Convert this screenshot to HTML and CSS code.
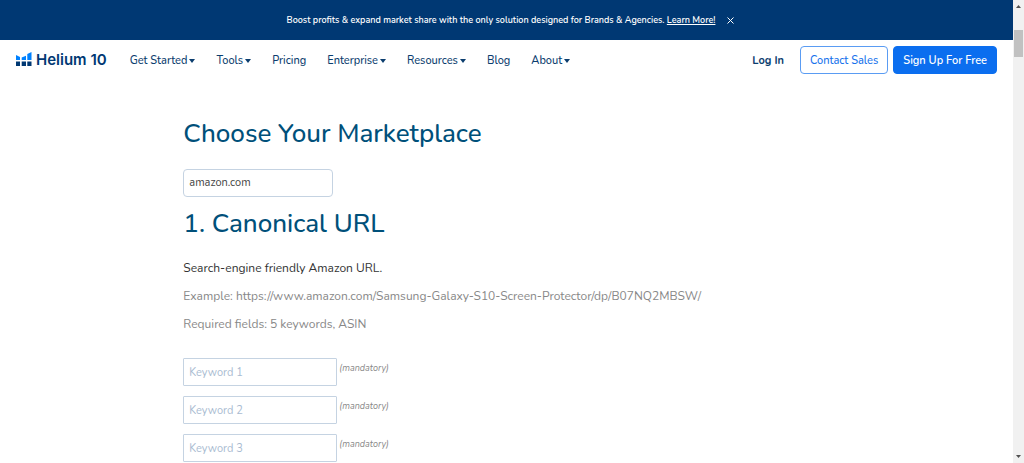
FILE: index.html
```html
<!DOCTYPE html>
<html lang="en">
<head>
<meta charset="utf-8">
<meta name="viewport" content="width=device-width, initial-scale=1">
<title>Helium 10</title>
<link rel="stylesheet" href="styles.css">
</head>
<body>
<div class="window">
  <div class="page">
    <div class="promo">
      <p class="promo-text">Boost profits &amp; expand market share with the only solution designed for Brands &amp; Agencies. <a href="#">Learn More!</a></p>
      <button class="promo-close" type="button" aria-label="Close">
        <svg width="7" height="7" viewBox="0 0 7 7"><path d="M.5.5l6 6M6.5.5l-6 6" stroke="currentColor" fill="none"/></svg>
      </button>
    </div>
    <header class="header">
      <a class="logo" href="#">
        <svg width="16" height="16" viewBox="0 0 16 16" aria-hidden="true">
          <path fill="#0081ff" d="M0 3l4 2v3H0zM5.700 5.500l4.300-1.800V8H5.700zM11.300 2L15.500 0v8h-4.200z"/>
          <path fill="#003873" d="M0 9.500h4V14H0zM5.700 9.500H10V14H5.700zM11.300 9.500h4.200V14h-4.200z"/>
        </svg>
        <span>Helium 10</span>
      </a>
      <nav class="nav">
        <a class="has-menu" href="#">Get Started</a>
        <a class="has-menu" href="#">Tools</a>
        <a href="#">Pricing</a>
        <a class="has-menu" href="#">Enterprise</a>
        <a class="has-menu" href="#">Resources</a>
        <a href="#">Blog</a>
        <a class="has-menu" href="#">About</a>
      </nav>
      <div class="actions">
        <a class="login" href="#">Log In</a>
        <a class="button" href="#">Contact Sales</a>
        <a class="button button-primary" href="#">Sign Up For Free</a>
      </div>
    </header>
    <main class="content">
      <h2><label for="marketplace">Choose Your Marketplace</label></h2>
      <select class="marketplace" id="marketplace"><option>amazon.com</option></select>
      <h2>1. Canonical URL</h2>
      <p class="lead">Search-engine friendly Amazon URL.</p>
      <p>Example: https://www.amazon.com/Samsung-Galaxy-S10-Screen-Protector/dp/B07NQ2MBSW/</p>
      <p>Required fields: 5 keywords, ASIN</p>
      <form class="fields">
        <div class="field"><input id="k1" type="text" placeholder="Keyword 1"><label for="k1">(mandatory)</label></div>
        <div class="field"><input id="k2" type="text" placeholder="Keyword 2"><label for="k2">(mandatory)</label></div>
        <div class="field"><input id="k3" type="text" placeholder="Keyword 3"><label for="k3">(mandatory)</label></div>
      </form>
    </main>
  </div>
  <div class="scrollbar" aria-hidden="true">
    <svg width="5" height="3" viewBox="0 0 5 3"><path d="M0 3L2.500 0 5 3z" fill="#505050"/></svg>
    <div class="thumb"></div>
    <svg width="5" height="3" viewBox="0 0 5 3"><path d="M0 0h5L2.500 3z" fill="#505050"/></svg>
  </div>
</div>
</body>
</html>
```
FILE: styles.css
```css
* { box-sizing: border-box; }
body {
  margin: 0;
  background: #fff;
  color: #888;
  font: 12px/16px Nunito, "Noto Sans", sans-serif;
}
p, h2 { margin: 0; }
a { color: inherit; text-decoration: none; }
.window { display: flex; height: 100vh; overflow: hidden; }
.page { flex: 1; min-width: 0; overflow: hidden; }

.promo {
  display: flex;
  align-items: center;
  justify-content: center;
  gap: 12px;
  height: 40px;
  padding-left: 8px;
  background: #003873;
  color: #fff;
}
.promo-text { font-size: 9px; font-weight: 600; }
.promo-text a { text-decoration: underline; }
.promo-close { display: flex; padding: 0; border: 0; background: none; color: #fff; }

.header {
  display: flex;
  align-items: center;
  height: 40px;
  padding: 0 16px;
  color: #0b3d6e;
  font-size: 11px;
}
.logo {
  display: flex;
  align-items: center;
  gap: 4px;
  margin-right: 23px;
  color: #003873;
  font: 600 15px/18px Inter, sans-serif;
  white-space: nowrap;
}
.nav { display: flex; gap: 21px; padding-top: 1px; font-weight: 500; white-space: nowrap; }
.has-menu { display: flex; align-items: center; gap: 2px; }
.has-menu::after {
  content: "";
  border: 3px solid transparent;
  border-top-width: 4px;
  border-top-color: currentColor;
  border-bottom: 0;
}
.actions { display: flex; align-items: center; gap: 5px; margin-left: auto; white-space: nowrap; }
.login { margin-right: 11px; padding-top: 1px; font-weight: 700; }
.button {
  padding: 6px 9px 4px;
  border: 1px solid #5a9cf3;
  border-radius: 4px;
  color: #1672ec;
  font-weight: 500;
}
.button-primary { border-color: #0b6eef; background: #0b6eef; color: #fff; font-weight: 600; }

.content { width: 64%; margin: 0 auto; padding: 36px 0 0 1px; }
.content h2 { color: #00507a; font-size: 26px; line-height: 36px; font-weight: 500; }
.marketplace {
  display: block;
  width: 150px;
  height: 28px;
  margin: 17px 0 9px;
  padding: 0 5px;
  appearance: none;
  border: 1px solid #c5d3e2;
  border-radius: 4px;
  background: #fff;
  color: #444;
  font: inherit;
  font-size: 11px;
}
.content p { margin-bottom: 12px; white-space: nowrap; }
.content .lead { margin-top: 18px; color: #333; }
.fields { display: grid; gap: 10px; padding-top: 14px; }
.field { display: flex; gap: 2px; }
.field input {
  width: 154px;
  height: 28px;
  padding: 0 5px;
  border: 1px solid #c5d3e2;
  border-radius: 1px;
  font: inherit;
  font-size: 11px;
}
.field input::placeholder { color: #a9bbd1; opacity: 1; }
.field label { padding-top: 2px; font-size: 9px; font-style: italic; }

.scrollbar {
  display: flex;
  flex-direction: column;
  align-items: center;
  width: 11px;
  padding: 5px 0;
  background: #f1f1f1;
}
.thumb { width: 9px; height: 27px; margin: 22px 0 auto; background: #c1c1c1; }
```
